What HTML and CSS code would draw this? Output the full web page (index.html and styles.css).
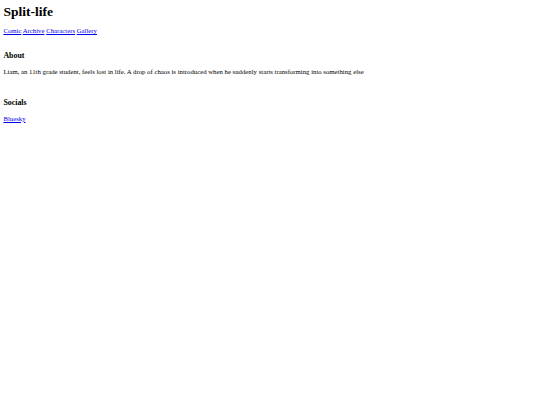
FILE: index.html
```html
<!DOCTYPE html>
<html lang="en">
  <head>
    <meta charset="UTF-8" />
    <meta name="viewport" content="width=device-width, initial-scale=1.0" />
    <title>Split-life</title>
    <link rel="stylesheet" href="styles.css">
  </head>
  <body>
    <header class="header">
      <h1 class="title">Split-life</h1>
      <nav class="nav">
        <a href="#">Comic</a>
        <a href="#">Archive</a>
        <a href="#">Characters</a>
        <a href="#">Gallery</a>
      </nav>
    </header>
    <main>
      <section class="block">
        <h3>About</h3>
        <p>Liam, an 11th grade student, feels lost in life. A drop of chaos is introduced when he suddenly starts transforming into something else</p>
      </section>
      <section class="block">
        <h3>Socials</h3>
        <div class="links">
          <a href="#">Bluesky</a>
        </div>
      </section>
    </main>
  </body>
</html>
```

FILE: styles.css
```css
body {
  margin: 0;
  padding: 4px 3.4px;
  font-family: "Liberation Serif", "Times New Roman", serif;
  font-size: 6.75px;
  background-color: #fff;
  color: #000;
}
a {
  color: #0000ee;
}
.header {
  padding-bottom: 9px;
}
.title {
  font-size: 13.5px;
  margin: 0 0 7px;
}
h3 {
  font-size: 7.9px;
  margin: 7.9px 0;
}
p {
  margin: 6.75px 0;
}
.block + .block {
  margin-top: 23px;
}
```
